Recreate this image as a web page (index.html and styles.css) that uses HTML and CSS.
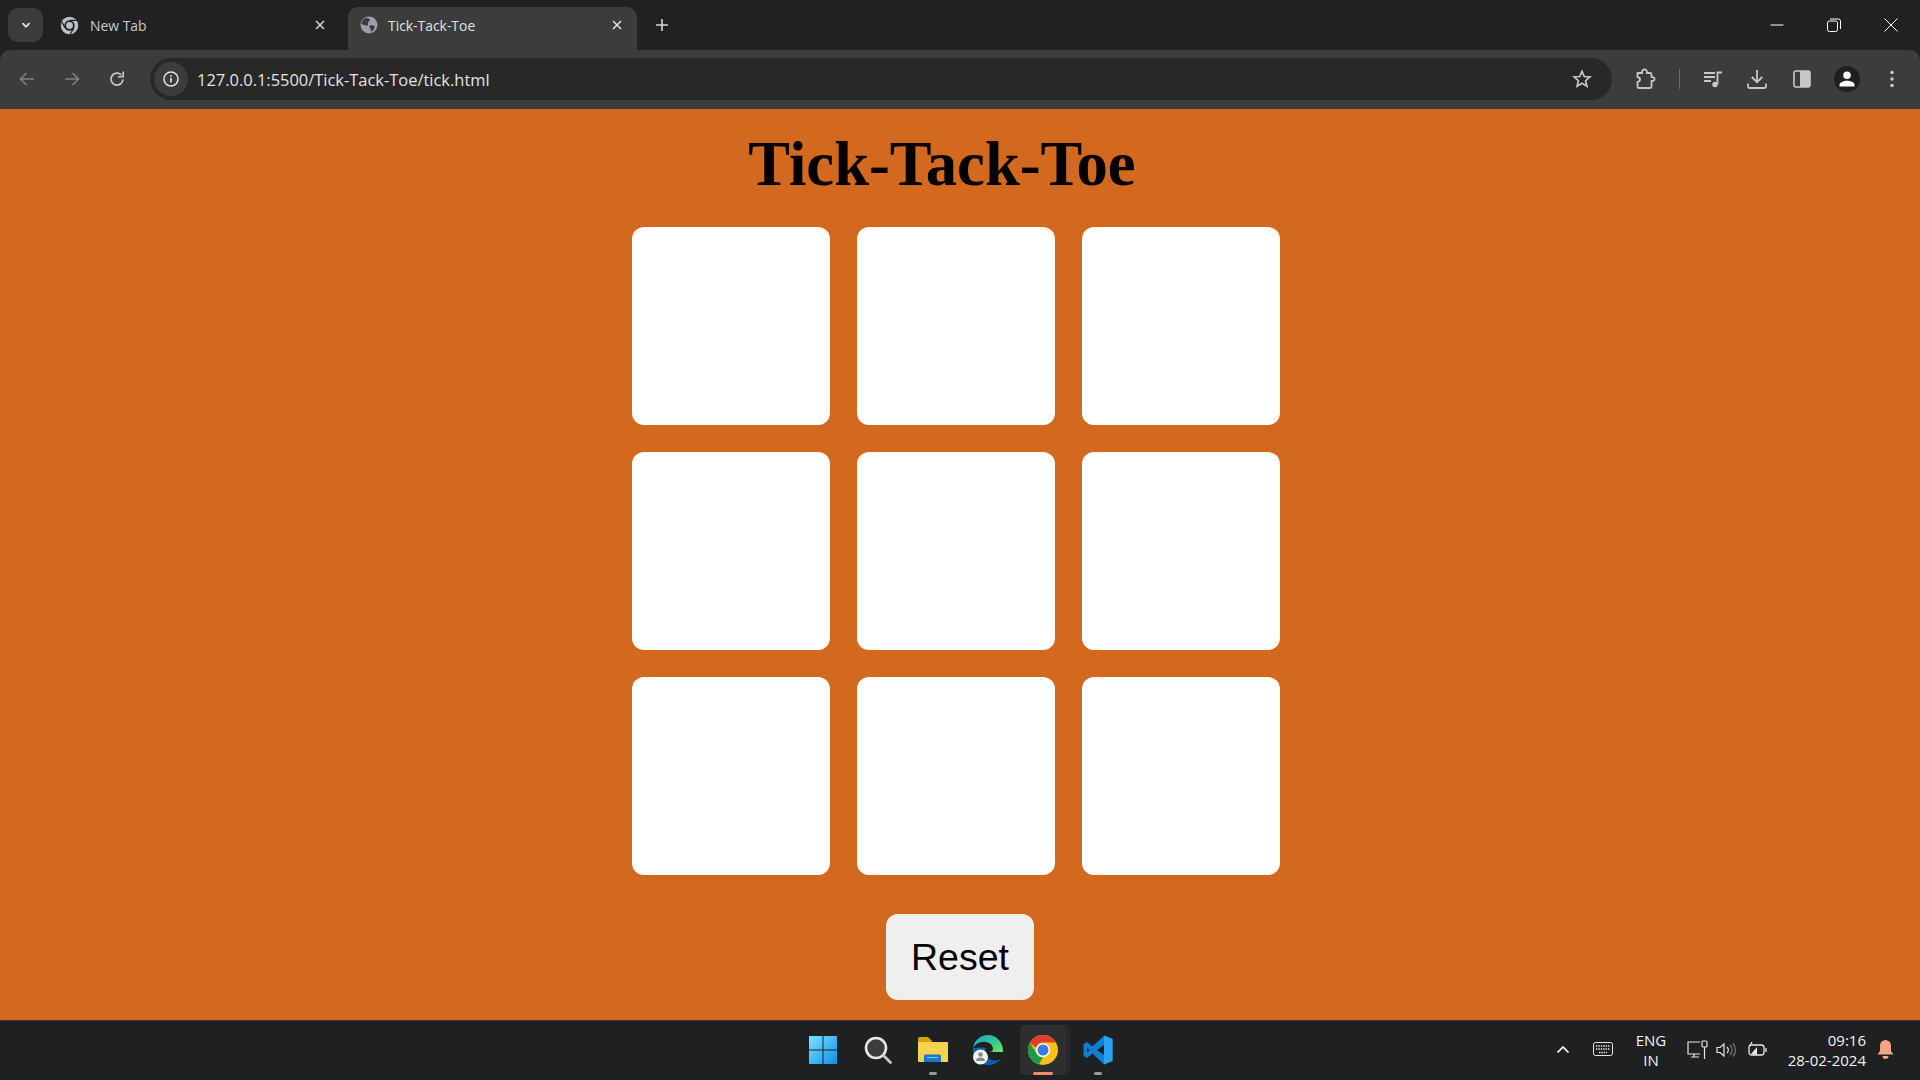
FILE: index.html
```html
<!DOCTYPE html>
<html lang="en">

<head>
   <meta charset="UTF-8">
   <meta name="viewport" content="width=device-width, initial-scale=1.0">
   <title>Tick-Tack-Toe</title>
   <link rel="stylesheet" href="styles.css">
</head>

<body>
   <div class="browser">
      <!-- Tabs -->
      <header class="tabstrip">
         <button class="tab-search">
            <svg width="12" height="12" viewBox="0 0 12 12"><path d="M2.500 4.200 6 7.800l3.500-3.600" fill="none" stroke="#e3e3e3" stroke-width="1.800"/></svg>
         </button>
         <div class="tab">
            <svg class="favicon" width="19" height="19" viewBox="0 0 20 20">
               <circle cx="10" cy="10" r="9.200" fill="#bdc1c6"/>
               <circle cx="10" cy="10" r="5.400" fill="#202222"/>
               <circle cx="10" cy="10" r="3.600" fill="#bdc1c6"/>
               <path d="M10 4.600h8M5.300 12.700 1.800 6M14.700 12.700 10.500 19.200" stroke="#202222" stroke-width="1.300" fill="none"/>
            </svg>
            <span class="tab-title">New Tab</span>
            <svg class="tab-close" width="12" height="12" viewBox="0 0 12 12"><path d="M2 2l8 8M10 2l-8 8" stroke="#d5d5d5" stroke-width="1.500"/></svg>
         </div>
         <div class="tab tab-active">
            <svg class="favicon" width="18" height="18" viewBox="0 0 18 18">
               <circle cx="9" cy="9" r="8.500" fill="#9aa0a6"/>
               <path d="M5 2.300c2.500-.6 4.600.2 4.800 1.700.2 1.300-1.500 1.500-1.900 2.600-.4 1.200 1 2.200-.4 2.900C6 10.200 3.600 8.400 1.500 8c.2-2.300 1.600-4.500 3.500-5.700ZM10 9.500c1.700-.6 3.700 0 4.500 1.100.6 1-.9 3.900-3 4.900-1.400-.4-.4-2.200-1.200-3.200-.8-1-1.500-2.200-.3-2.800Z" fill="#3c3c3c"/>
            </svg>
            <span class="tab-title">Tick-Tack-Toe</span>
            <svg class="tab-close" width="12" height="12" viewBox="0 0 12 12"><path d="M2 2l8 8M10 2l-8 8" stroke="#e3e3e3" stroke-width="1.500"/></svg>
         </div>
         <svg class="new-tab" width="14" height="14" viewBox="0 0 14 14"><path d="M7 1v12M1 7h12" stroke="#d5d5d5" stroke-width="1.600"/></svg>
         <div class="window-controls">
            <svg width="14" height="14" viewBox="0 0 14 14"><path d="M.5 7h13" stroke="#fff"/></svg>
            <svg width="14" height="14" viewBox="0 0 14 14" fill="none" stroke="#fff"><rect x=".5" y="3" width="10" height="10.500" rx="1.800"/><path d="M3 1h8.500a2 2 0 0 1 2 2v8"/></svg>
            <svg width="14" height="14" viewBox="0 0 14 14"><path d="M.5.500l13 13M13.500.500l-13 13" stroke="#fff"/></svg>
         </div>
      </header>

      <!-- Toolbar -->
      <nav class="toolbar">
         <div class="nav-buttons">
            <svg width="18" height="18" viewBox="0 0 18 18" fill="none" stroke="#7f8080" stroke-width="1.600"><path d="M16 9H2.500M8.500 3l-6 6 6 6"/></svg>
            <svg width="18" height="18" viewBox="0 0 18 18" fill="none" stroke="#7f8080" stroke-width="1.600"><path d="M2 9h13.500M9.500 3l6 6-6 6"/></svg>
            <svg width="18" height="18" viewBox="0 0 18 18" fill="none" stroke="#c7c7c7" stroke-width="1.800"><path d="M15 9.500A6 6 0 1 1 13.200 4.800"/><path d="M15.200 1.500v5.200H10" stroke-width="1.600"/></svg>
         </div>
         <div class="omnibox">
            <span class="site-info">
               <svg width="16" height="16" viewBox="0 0 16 16"><circle cx="8" cy="8" r="7" fill="none" stroke="#e3e3e3" stroke-width="1.500"/><path d="M8 7v4.500M8 4.200v1.600" stroke="#e3e3e3" stroke-width="1.700"/></svg>
            </span>
            <span class="url">127.0.0.1:5500/Tick-Tack-Toe/tick.html</span>
            <svg class="star" width="20" height="20" viewBox="0 0 20 20"><path d="M10 2.300l2.300 5.200 5.600.5-4.300 3.700 1.300 5.500L10 14.300l-4.900 2.900 1.300-5.500L2.100 8l5.600-.5z" fill="none" stroke="#c7c7c7" stroke-width="1.700"/></svg>
         </div>
         <div class="toolbar-actions">
            <svg class="tool-ext" width="22" height="22" viewBox="0 0 22 22" fill="none" stroke="#c7c7c7" stroke-width="1.800" stroke-linejoin="round"><path d="M2.500 5h4.700c-.5-2.200.8-3.600 2.300-3.600s2.800 1.400 2.300 3.600h3.200a1.500 1.500 0 0 1 1.500 1.500v2.700c2.200-.3 3 .7 3 1.800s-.8 2.100-3 1.800v5.700a1.500 1.500 0 0 1-1.500 1.500H4a1.500 1.500 0 0 1-1.500-1.500v-4.500c1.700-.3 2.500-1.300 2.500-2.500S4.200 9.300 2.500 9z"/></svg>
            <span class="tool-sep"></span>
            <svg class="tool-queue" width="20" height="18" viewBox="0 0 20 18" fill="none" stroke="#c7c7c7" stroke-width="1.800"><path d="M1 3h11M1 7h11M1 11h7"/><path d="M14.500 14V2.500H19"/><circle cx="12" cy="14.500" r="2.700" fill="#c7c7c7" stroke="none"/></svg>
            <svg class="tool-download" width="20" height="20" viewBox="0 0 20 20" fill="none" stroke="#c7c7c7" stroke-width="1.800"><path d="M10 1v11.500M4.800 8l5.200 5.200L15.200 8"/><path d="M1 14.500v3a1.500 1.500 0 0 0 1.500 1.500h15a1.500 1.500 0 0 0 1.500-1.500v-3"/></svg>
            <svg class="tool-panel" width="18" height="18" viewBox="0 0 18 18"><rect x="1" y="1" width="16" height="16" rx="2" fill="none" stroke="#c7c7c7" stroke-width="1.600"/><rect x="7" y="1" width="10" height="16" fill="#c7c7c7"/></svg>
            <span class="avatar">
               <svg width="18" height="18" viewBox="0 0 18 18" fill="#fff"><circle cx="9" cy="5.300" r="3.800"/><path d="M1.500 16.500v-1.800c0-2.700 5-4 7.500-4s7.500 1.300 7.500 4v1.800z"/></svg>
            </span>
            <svg class="tool-menu" width="4" height="18" viewBox="0 0 4 18" fill="#c7c7c7"><circle cx="2" cy="2.500" r="1.800"/><circle cx="2" cy="9" r="1.800"/><circle cx="2" cy="15.500" r="1.800"/></svg>
         </div>
      </nav>
   </div>

   <!-- Juego -->
   <main class="game">
      <h1>Tick-Tack-Toe</h1>
      <div class="board">
         <div class="cell"></div>
         <div class="cell"></div>
         <div class="cell"></div>
         <div class="cell"></div>
         <div class="cell"></div>
         <div class="cell"></div>
         <div class="cell"></div>
         <div class="cell"></div>
         <div class="cell"></div>
      </div>
      <button class="reset">Reset</button>
   </main>

   <!-- Barra de tareas -->
   <footer class="taskbar">
      <div class="apps">
         <span class="app">
            <svg width="30" height="30" viewBox="0 0 30 30">
               <defs><linearGradient id="win" x1="0" y1="0" x2="1" y2="1"><stop offset="0" stop-color="#7fe0ff"/><stop offset="1" stop-color="#0f8fe8"/></linearGradient></defs>
               <path d="M1 1h13.500v13.500H1zM15.500 1H29v13.500H15.500zM1 15.500h13.500V29H1zM15.500 15.500H29V29H15.500z" fill="url(#win)"/>
            </svg>
         </span>
         <span class="app">
            <svg width="30" height="30" viewBox="0 0 30 30" fill="none"><circle cx="13" cy="13" r="10" fill="#3c3c3c" stroke="#e8e8e8" stroke-width="2.600"/><path d="M20.500 20.500l7 7" stroke="#c9c9c9" stroke-width="2.800" stroke-linecap="round"/></svg>
         </span>
         <span class="app app-open">
            <svg width="32" height="30" viewBox="0 0 32 30">
               <path d="M1 3.500A1.500 1.500 0 0 1 2.500 2h8.500l4 4v4H1z" fill="#d9a008"/>
               <path d="M1 7h29a1 1 0 0 1 1 1v18a1 1 0 0 1-1 1H2a1 1 0 0 1-1-1z" fill="#fbd24e"/>
               <path d="M7 21a1.500 1.500 0 0 1 1.500-1.500h14A1.500 1.500 0 0 1 24 21v6H7z" fill="#1877c9"/>
               <path d="M10 22.500h11" stroke="#7cc4f2" stroke-width="1.200"/>
            </svg>
         </span>
         <span class="app">
            <svg width="30" height="30" viewBox="0 0 30 30">
               <defs>
                  <linearGradient id="edge" x1="0" y1="0" x2="1" y2="1"><stop offset="0" stop-color="#1da1d8"/><stop offset=".55" stop-color="#36c88a"/><stop offset="1" stop-color="#7de06c"/></linearGradient>
               </defs>
               <path d="M15 0C7 0 1 6 0 13c3-5 8-7 13-6 5 1 7 4 7 7 0 2-2 3-4 3h14c.5-9-6-17-15-17z" fill="url(#edge)"/>
               <path d="M0 13c-1 8 5 16 14 17 6 .5 11-2 14-6-4 2-10 2-13-1-3-3-3-7-2-10-5-1-10 0-13 0z" fill="#0d5fae"/>
               <circle cx="7.500" cy="22" r="7.500" fill="#f2f2f2"/>
               <circle cx="7.500" cy="19.500" r="2.300" fill="#8a8a8a"/>
               <path d="M3 26c0-2.500 2-3.500 4.500-3.500S12 23.500 12 26z" fill="#8a8a8a"/>
            </svg>
         </span>
         <span class="app app-active">
            <svg width="30" height="30" viewBox="0 0 30 30">
               <circle cx="15" cy="15" r="15" fill="#fbc116"/>
               <path d="M15 0A15 15 0 0 1 28 7.500H15a7.500 7.500 0 0 0-7.200 5.200L2 7.500A15 15 0 0 1 15 0Z" fill="#e33b2e"/>
               <path d="M2 7.500 8.500 18.800A7.500 7.500 0 0 0 15 22.500l-4.300 7A15 15 0 0 1 2 7.500Z" fill="#199c4b"/>
               <circle cx="15" cy="15" r="7" fill="#fff"/>
               <circle cx="15" cy="15" r="5.500" fill="#3b78e7"/>
            </svg>
         </span>
         <span class="app app-open">
            <svg width="30" height="30" viewBox="0 0 30 30">
               <path d="M21 .5 9.500 11.500 4 7 .5 9v12L4 23l5.500-4.500L21 29.500l8.500-3.500V4z" fill="#0e7fcf"/>
               <path d="M21 .5 29.500 4v22L21 29.500z" fill="#27a4ee"/>
               <path d="M21 10l-7 5 7 5z" fill="#1e2021"/>
               <path d="M4 12.500v5l2.500-2.500z" fill="#1e2021"/>
            </svg>
         </span>
      </div>
      <div class="tray">
         <svg class="tray-caret" width="14" height="9" viewBox="0 0 14 9"><path d="M1.500 7.500 7 2l5.500 5.500" fill="none" stroke="#fff" stroke-width="1.700"/></svg>
         <svg class="tray-keyboard" width="20" height="15" viewBox="0 0 20 15" fill="none" stroke="#e6e6e6"><rect x=".5" y=".5" width="19" height="13" rx="2"/><path d="M3 4h14M3 7h14M6 10.500h8" stroke-width="1.400" stroke-dasharray="1.400 1"/></svg>
         <div class="tray-lang">ENG<br>IN</div>
         <svg class="tray-net" width="21" height="20" viewBox="0 0 21 20" fill="none" stroke="#e6e6e6" stroke-width="1.200"><path d="M13 2H1v12h12M4 17h8M7 14v3"/><rect x="15" y="1" width="5" height="6" rx="1"/><path d="M17.500 7v12"/></svg>
         <svg class="tray-sound" width="21" height="16" viewBox="0 0 21 16" fill="none" stroke="#e6e6e6" stroke-width="1.200"><path d="M1 5.500h3L8 2v12l-4-3.500H1z"/><path d="M11 5a4 4 0 0 1 0 6"/><path d="M14 3a7 7 0 0 1 0 10M17 1.500a10 10 0 0 1 0 13" stroke="#777"/></svg>
         <svg class="tray-battery" width="20" height="17" viewBox="0 0 20 17" fill="none" stroke="#e6e6e6" stroke-width="1.300"><rect x="1" y="4" width="15" height="10" rx="2.500"/><path d="M18 7v4"/><path d="M3 13l6-7v8z" fill="#e6e6e6" stroke="none"/><path d="M4 1 1.500 5"/></svg>
         <div class="tray-clock">09:16<br>28-02-2024</div>
         <svg class="tray-bell" width="17" height="20" viewBox="0 0 17 20" fill="#f4a582"><path d="M8.500 0A5.500 5.500 0 0 0 3 5.500V11l-2.500 3.500h16L14 11V5.500A5.500 5.500 0 0 0 8.500 0Z"/><path d="M5.500 16h6a3 3 0 0 1-6 0Z"/></svg>
      </div>
   </footer>
</body>

</html>
```

FILE: styles.css
```css
* {
   box-sizing: border-box;
}

html,
body {
   height: 100%;
}

body {
   margin: 0;
   display: flex;
   flex-direction: column;
   overflow: hidden;
   background-color: chocolate;
}

svg {
   display: block;
   flex-shrink: 0;
}

.browser {
   flex-shrink: 0;
   background-color: #202222;
}

/* Tabs */
.tabstrip {
   height: 50px;
   display: flex;
   align-items: flex-end;
   font-family: "Open Sans", sans-serif;
   font-size: 13.9px;
}

.tab-search {
   width: 35px;
   height: 34px;
   margin: 0 0 8px 8px;
   padding: 0;
   border: 0;
   border-radius: 10px;
   background-color: #3c3c3c;
   display: flex;
   align-items: center;
   justify-content: center;
}

.tab {
   width: 289px;
   height: 43px;
   padding: 0 14px 7px 12px;
   display: flex;
   align-items: center;
   color: #c9cbcb;
}

.tab:nth-child(2) {
   width: 305px;
   padding-left: 17px;
   padding-right: 22px;
}

.tab:nth-child(2) .tab-title {
   margin-left: 11px;
}

.tab-active {
   border-radius: 10px 10px 0 0;
   background-color: #3c3c3c;
   color: #e3e3e3;
}

.tab-title {
   flex: 1;
   margin-left: 10px;
   white-space: nowrap;
}

.new-tab {
   margin: 0 0 18px 18px;
}

.window-controls {
   margin: 0 22px 18px auto;
   display: flex;
   gap: 42px;
}

.window-controls svg:nth-child(-n+2) {
   margin-right: 1px;
}

/* Toolbar */
.toolbar {
   height: 59px;
   padding: 8px 0 9px;
   display: flex;
   align-items: center;
   border-radius: 10px 10px 0 0;
   background-color: #3c3c3c;
}

.nav-buttons {
   width: 150px;
   padding: 0 0 0 18px;
   display: flex;
   gap: 27px;
}

.omnibox {
   width: 1462px;
   height: 42px;
   padding: 0 20px 0 4px;
   display: flex;
   align-items: center;
   border-radius: 21px;
   background-color: #282828;
}

.site-info {
   width: 34px;
   height: 34px;
   display: flex;
   align-items: center;
   justify-content: center;
   border-radius: 50%;
   background-color: #3c3c3c;
}

.url {
   flex: 1;
   margin-left: 9px;
   font-family: "Open Sans", sans-serif;
   font-size: 16.44px;
   color: #e3e3e3;
}

.toolbar-actions {
   flex: 1;
   display: flex;
   align-items: center;
}

.tool-ext {
   margin-left: 23px;
}

.tool-sep {
   width: 1px;
   height: 20px;
   margin-left: 22px;
   background-color: #6a6a6a;
}

.tool-queue {
   margin-left: 23px;
}

.tool-download {
   margin-left: 24px;
}

.tool-panel {
   margin-left: 26px;
}

.avatar {
   width: 26px;
   height: 26px;
   margin-left: 23px;
   display: flex;
   align-items: center;
   justify-content: center;
   border-radius: 50%;
   background-color: #1f1f1f;
}

.tool-menu {
   margin-left: 30px;
}

/* Juego */
.game {
   flex: 1;
   display: flex;
   flex-direction: column;
   align-items: center;
   padding-top: 20px;
}

.game h1 {
   margin: 0 36px 0 0;
   font-family: "Liberation Serif", serif;
   font-size: 62.6px;
   line-height: 71px;
   font-weight: bold;
   color: #000;
}

.board {
   margin: 27px 8px 0 0;
   display: grid;
   grid-template-columns: repeat(3, 198px);
   grid-auto-rows: 198px;
   gap: 27px;
}

.cell {
   border-radius: 12px;
   background-color: #fff;
}

.reset {
   width: 148px;
   height: 86px;
   margin-top: 39px;
   border: 0;
   border-radius: 12px;
   background-color: #efefef;
   font-family: "Liberation Sans", sans-serif;
   font-size: 37.5px;
   color: #000;
}

/* Barra de tareas */
.taskbar {
   height: 60px;
   flex-shrink: 0;
   padding-bottom: 2px;
   display: grid;
   grid-template-columns: 1fr auto 1fr;
   align-items: center;
   border-top: 1px solid #3a3a3a;
   background-color: #1e2021;
   font-family: "Open Sans", sans-serif;
   font-size: 15px;
   color: #f2f2f2;
}

.apps {
   grid-column: 2;
   display: flex;
}

.app {
   position: relative;
   width: 55px;
   height: 50px;
   display: flex;
   align-items: center;
   justify-content: center;
   border-radius: 5px;
}

.app-open::after,
.app-active::after {
   content: "";
   position: absolute;
   left: 50%;
   bottom: 0;
   width: 8px;
   height: 3px;
   margin-left: -4px;
   border-radius: 2px;
   background-color: #9a9a9a;
}

.app-active {
   width: 46px;
   margin: 0 4px 0 5px;
   background-color: #2c2e2f;
   box-shadow: 4px 0 0 #262829;
}

.app-active::after {
   width: 20px;
   margin-left: -10px;
   background-color: #f58a6e;
}

.tray {
   grid-column: 3;
   justify-self: end;
   display: flex;
   align-items: center;
   padding-right: 26px;
}

.tray-lang {
   width: 40px;
   margin-left: 18px;
   text-align: center;
   line-height: 20px;
}

.tray-keyboard {
   margin-left: 23px;
}

.tray-net {
   margin-left: 16px;
}

.tray-sound {
   margin-left: 8px;
}

.tray-battery {
   margin-left: 11px;
}

.tray-clock {
   width: 90px;
   margin-left: 8px;
   text-align: right;
   line-height: 20px;
}

.tray-bell {
   margin-left: 11px;
}
```
